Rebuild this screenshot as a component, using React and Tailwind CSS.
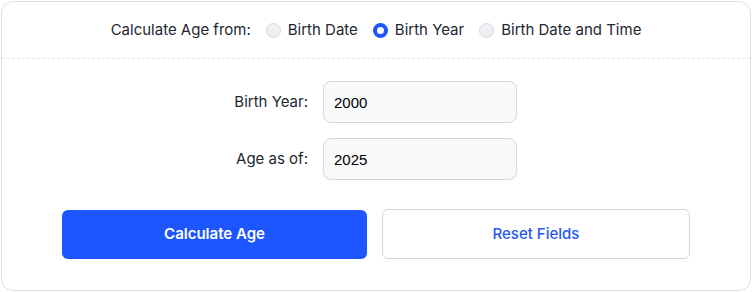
import React, { useState } from 'react';

function Radio({ checked, label, onClick }) {
  return (
    <label className="flex items-center gap-[7px] cursor-pointer" onClick={onClick}>
      <span
        className={
          checked
            ? 'w-[15px] h-[15px] rounded-full border-[4px] border-[#1d56ff] bg-white'
            : 'w-[15px] h-[15px] rounded-full border border-[#d7dae0] bg-[#eef0f3]'
        }
      />
      <span className="text-[15px] text-[#222831]">{label}</span>
    </label>
  );
}

export default function App() {
  const [mode, setMode] = useState('year');
  const [birthYear, setBirthYear] = useState('2000');
  const [asOf, setAsOf] = useState('2025');

  return (
    <div className="w-[752px] h-[292px] bg-white p-px" style={{ fontFamily: 'Inter, "Noto Sans", sans-serif' }}>
      <div className="h-full rounded-[12px] border border-[#dcdfe4] bg-white">
        <div className="h-[57px] flex items-center justify-center gap-[15px] border-b border-dashed border-[#e3e5e9]">
          <span className="text-[15px] text-[#222831]">Calculate Age from:</span>
          <Radio checked={mode === 'date'} label="Birth Date" onClick={() => setMode('date')} />
          <Radio checked={mode === 'year'} label="Birth Year" onClick={() => setMode('year')} />
          <Radio checked={mode === 'datetime'} label="Birth Date and Time" onClick={() => setMode('datetime')} />
        </div>

        <div className="flex flex-col items-center gap-[15px] pt-[22px] pr-[27px]">
          <div className="flex items-center gap-[15px]">
            <span className="w-[100px] text-right text-[15px] text-[#222831]">Birth Year:</span>
            <input
              value={birthYear}
              onChange={(e) => setBirthYear(e.target.value)}
              className="w-[194px] h-[42px] rounded-[8px] border border-[#d3d6dc] bg-[#f8f9fb] px-[10px] text-[15px] text-black outline-none"
              style={{ fontFamily: '"Liberation Sans", Arial, sans-serif' }}
            />
          </div>
          <div className="flex items-center gap-[15px]">
            <span className="w-[100px] text-right text-[15px] text-[#222831]">Age as of:</span>
            <input
              value={asOf}
              onChange={(e) => setAsOf(e.target.value)}
              className="w-[194px] h-[42px] rounded-[8px] border border-[#d3d6dc] bg-[#f8f9fb] px-[10px] text-[15px] text-black outline-none"
              style={{ fontFamily: '"Liberation Sans", Arial, sans-serif' }}
            />
          </div>
        </div>

        <div className="grid grid-cols-[305px_308px] gap-[15px] px-[60px] pt-[30px]">
          <button className="h-[49px] rounded-[6px] bg-[#1d56ff] text-white text-[15px] font-semibold">
            Calculate Age
          </button>
          <button className="h-[50px] -mt-px rounded-[6px] border border-[#d3d6dc] bg-white text-[#2757f5] text-[15px] font-medium">
            Reset Fields
          </button>
        </div>
      </div>
    </div>
  );
}
